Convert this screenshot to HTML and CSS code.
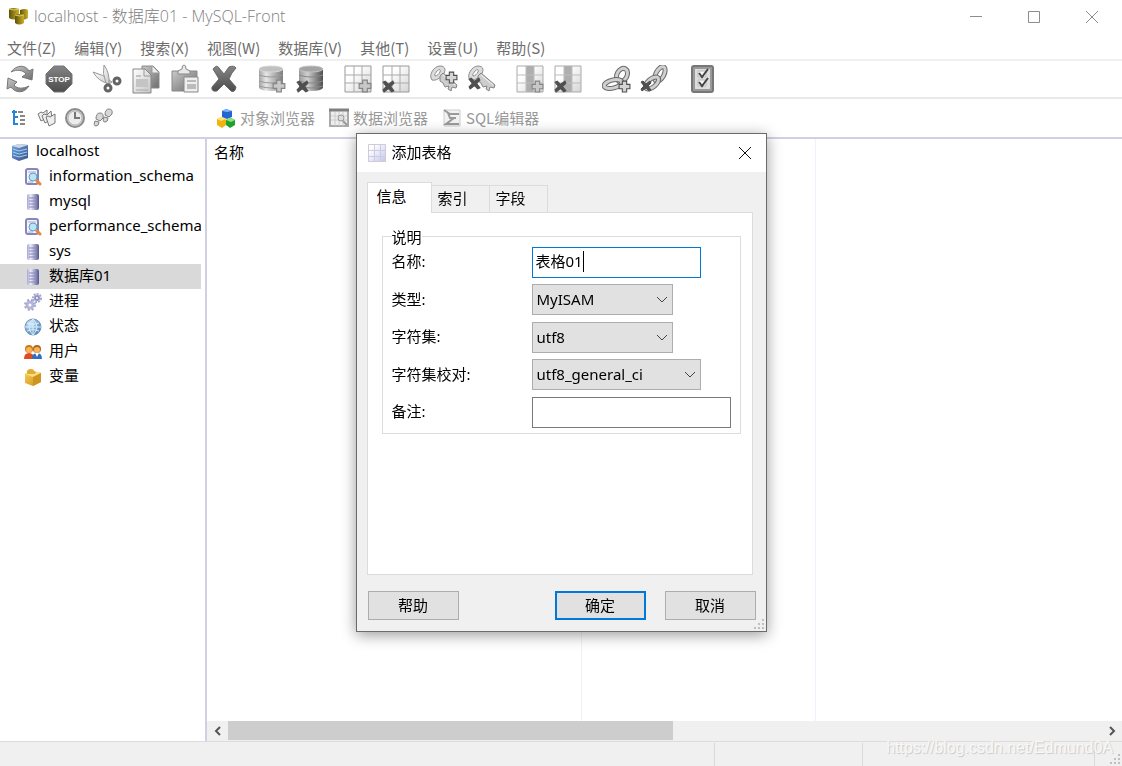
FILE: index.html
```html
<!DOCTYPE html>
<html lang="zh-CN">
<head>
<meta charset="utf-8">
<title>localhost - 数据库01 - MySQL-Front</title>
<link rel="stylesheet" href="styles.css">
</head>
<body>
<svg class="defs" aria-hidden="true">
  <defs>
    <linearGradient id="gray" x1="0" y1="0" x2="1" y2="1"><stop offset="0" stop-color="#c9c9c9"/><stop offset="1" stop-color="#6c6c6c"/></linearGradient>
    <linearGradient id="dark" x1="0" y1="0" x2="0" y2="1"><stop offset="0" stop-color="#858585"/><stop offset="1" stop-color="#4c4c4c"/></linearGradient>
    <linearGradient id="pale" x1="0" y1="0" x2="1" y2="1"><stop offset="0" stop-color="#ffffff"/><stop offset="1" stop-color="#c4c4c4"/></linearGradient>
    <linearGradient id="sheet" x1="0" y1="0" x2="1" y2="1"><stop offset=".3" stop-color="#ffffff"/><stop offset="1" stop-color="#d4d4d4"/></linearGradient>
    <linearGradient id="drum" x1="0" y1="0" x2="1" y2="0"><stop offset="0" stop-color="#a4a4a4"/><stop offset=".3" stop-color="#e6e6e6"/><stop offset="1" stop-color="#7c7c7c"/></linearGradient>
    <linearGradient id="drumdark" x1="0" y1="0" x2="1" y2="0"><stop offset="0" stop-color="#9a9a9a"/><stop offset=".35" stop-color="#d0d0d0"/><stop offset="1" stop-color="#4f4f4f"/></linearGradient>
    <linearGradient id="violet" x1="0" y1="0" x2="1" y2="0"><stop offset="0" stop-color="#a4a4d2"/><stop offset=".3" stop-color="#ececfa"/><stop offset="1" stop-color="#55558f"/></linearGradient>
    <linearGradient id="lilac" x1="0" y1="0" x2="1" y2="1"><stop offset=".2" stop-color="#ffffff"/><stop offset="1" stop-color="#c3c3f2"/></linearGradient>
    <linearGradient id="server" x1="0" y1="0" x2="1" y2="1"><stop offset="0" stop-color="#6ea5de"/><stop offset="1" stop-color="#3c4f86"/></linearGradient>
    <linearGradient id="gold" x1="0" y1="0" x2="1" y2="0"><stop offset="0" stop-color="#5f5208"/><stop offset="1" stop-color="#c9b02a"/></linearGradient>
    <linearGradient id="box" x1="0" y1="0" x2="1" y2="1"><stop offset="0" stop-color="#f7cf5c"/><stop offset="1" stop-color="#d08f12"/></linearGradient>
    <radialGradient id="globe" cx=".35" cy=".3" r=".8"><stop offset="0" stop-color="#d9edfb"/><stop offset="1" stop-color="#3d78b4"/></radialGradient>
    <symbol id="plus" viewBox="0 0 12 12"><path d="M4 1h4v3h3v4H8v3H4V8H1V4h3z" fill="#c8c8c8" stroke="#858585"/></symbol>
    <symbol id="plusdark" viewBox="0 0 12 12"><path d="M4 1h4v3h3v4H8v3H4V8H1V4h3z" fill="#d4d4d4" stroke="#4e4e4e"/></symbol>
    <symbol id="cross" viewBox="0 0 12 12"><path d="M1 2l2-1 3 3 4-3 1 2-3 3 3 4-2 1-3-3-4 3-1-2 3-3z" fill="#505050" stroke="#505050"/></symbol>
    <symbol id="key" viewBox="0 0 28 28"><path d="M2 15C-2 10 4 1 10 1c6 0 6 5 3 9-3 3-7 6-11 5zM5 11c2 0 4-2 5-4 1-3-1-3-3-1-1 2-3 3-2 5z" fill="#dcdcdc" stroke="#8c8c8c" fill-rule="evenodd"/><path d="M10 11l3-3 14 12-1 3-4-1-1 4-3-2 1-3-4 1-2-4-3-2z" fill="#cdcdcd" stroke="#858585"/><path d="M13 10l12 10" stroke="#f5f5f5"/></symbol>
    <symbol id="chain" viewBox="0 0 28 28"><g fill="none"><ellipse cx="20" cy="10" rx="5" ry="7" transform="rotate(28 20 10)" stroke="#6b6b6b" stroke-width="5"/><ellipse cx="20" cy="10" rx="5" ry="7" transform="rotate(28 20 10)" stroke="#cfcfcf" stroke-width="3"/><ellipse cx="11" cy="19" rx="9" ry="4" transform="rotate(-14 11 19)" stroke="#6b6b6b" stroke-width="5"/><ellipse cx="11" cy="19" rx="9" ry="4" transform="rotate(-14 11 19)" stroke="#cfcfcf" stroke-width="3"/></g></symbol>
    <symbol id="chaindown" viewBox="0 0 28 28"><g fill="none"><ellipse cx="20" cy="9" rx="4" ry="8" transform="rotate(28 20 9)" stroke="#6b6b6b" stroke-width="5"/><ellipse cx="20" cy="9" rx="4" ry="8" transform="rotate(28 20 9)" stroke="#cfcfcf" stroke-width="3"/><ellipse cx="12" cy="18" rx="4" ry="8" transform="rotate(50 12 18)" stroke="#6b6b6b" stroke-width="5"/><ellipse cx="12" cy="18" rx="4" ry="8" transform="rotate(50 12 18)" stroke="#cfcfcf" stroke-width="3"/></g></symbol>
    <symbol id="db" viewBox="0 0 18 18"><rect x="3" y="1" width="12" height="16" rx="2" fill="url(#violet)"/><path d="M5 5h8M5 8h8M5 11h8M5 14h8" stroke="#8585bd"/></symbol>
    <symbol id="dbsearch" viewBox="0 0 18 18"><rect x="2" y="1" width="12" height="15" rx="2" fill="#f4f4fc" stroke="#8686bd" stroke-width="2"/><path d="M4 4h8M4 14h5" stroke="#a8a8d6"/><circle cx="9" cy="9" r="4" fill="#b5e6f8" stroke="#6d9ab7"/><path d="M13 13l3 3" stroke="#e8873c" stroke-width="3" stroke-linecap="round"/></symbol>
  </defs>
</svg>

<div class="window">
  <header class="titlebar">
    <svg class="app-icon" viewBox="0 0 20 20"><path d="M0 2q5-2 10 0v9q-5 3-10 0z" fill="url(#gold)"/><path d="M11 3q5-2 8 0v8q-4 3-8 0z" fill="url(#gold)"/><path d="M6 8q5-2 9 0v8q-5 3-9 0z" fill="url(#gold)"/><path d="M6 8q5 2 9 0M0 2q5 2 10 0" fill="none" stroke="#e0ca55"/></svg>
    <h1 class="title">localhost - 数据库01 - MySQL-Front</h1>
    <div class="window-buttons">
      <button class="window-button" aria-label="最小化"><svg viewBox="0 0 14 14"><path d="M1 6.500h12"/></svg></button>
      <button class="window-button" aria-label="最大化"><svg viewBox="0 0 14 14"><path d="M1.500 1.500h11v11h-11z"/></svg></button>
      <button class="window-button" aria-label="关闭"><svg viewBox="0 0 14 14"><path d="M1 1l12 12M13 1L1 13"/></svg></button>
    </div>
  </header>

  <nav class="menubar">
    <button>文件(Z)</button><button>编辑(Y)</button><button>搜索(X)</button><button>视图(W)</button><button>数据库(V)</button><button>其他(T)</button><button>设置(U)</button><button>帮助(S)</button>
  </nav>

  <div class="toolbar">
    <div class="tool-group wide">
      <button class="tool" aria-label="刷新"><svg viewBox="0 0 28 28"><path d="M5 7C11-1 20 0 23 6l4-2-1 11-10-3 4-3C17 5 11 4 5 7z" fill="url(#gray)" stroke="#777"/><path d="M23 21c-5 8-14 7-18 1l-4 2 1-11 9 4-3 3c3 4 9 4 15 1z" fill="url(#gray)" stroke="#777"/></svg></button>
      <button class="tool" aria-label="停止"><svg viewBox="0 0 28 28"><path d="M9 1h10l8 8v10l-8 8H9l-8-8V9z" fill="url(#dark)" stroke="#777"/><text x="14" y="17" class="stop-text">STOP</text></svg></button>
    </div>
    <div class="tool-group wide">
      <button class="tool" aria-label="剪切"><svg viewBox="0 0 28 28"><path d="M0 7q10 2 19 10l-3 2Q5 16 0 7z" fill="url(#pale)" stroke="#999"/><path d="M11 0q6 8 5 19l-3-1Q9 8 11 0z" fill="url(#pale)" stroke="#999"/><circle cx="15" cy="23" r="3" fill="none" stroke="#636363" stroke-width="3"/><circle cx="24" cy="16" r="3" fill="none" stroke="#636363" stroke-width="3"/></svg></button>
      <button class="tool" aria-label="复制"><svg viewBox="0 0 28 28"><path d="M10 1h11l6 6v16H10z" fill="url(#gray)" stroke="#888"/><path d="M20 1v7h7" fill="#eee" stroke="#999"/><path d="M1 4h12l6 6v18H1z" fill="url(#pale)" stroke="#888"/><path d="M12 4v7h7M4 11h5" fill="none" stroke="#999"/><path d="M4 14h12v8H4z" fill="#c4c4c4"/><path d="M4 25h12" stroke="#aaa"/></svg></button>
      <button class="tool" aria-label="粘贴"><svg viewBox="0 0 28 28"><path d="M1 6h25v20H1z" fill="url(#gray)" stroke="#888"/><path d="M7 9V6l4-2q0-4 2-4t2 4l4 2v3z" fill="#e8e8e8" stroke="#888"/><path d="M13 12h14v15H13z" fill="#eee" stroke="#888"/><path d="M16 15h9v2h-9zM16 19h9v5h-9z" fill="#bbb"/></svg></button>
      <button class="tool" aria-label="删除"><svg viewBox="0 0 28 28"><path d="M3 4q4-5 6-1l5 6 5-7q5-2 7 1-5 5-7 11l7 8q-1 6-5 4l-7-7-7 7q-6 1-5-4l7-8z" fill="url(#dark)" stroke="#666"/></svg></button>
    </div>
    <div class="tool-group">
      <button class="tool" aria-label="添加数据库"><svg viewBox="0 0 28 28"><path d="M1 4v19q2 3 12 3t12-3V4q-2-3-12-3T1 4z" fill="url(#drum)"/><ellipse cx="13" cy="4" rx="12" ry="3" fill="#c0c0c0" stroke="#d8d8d8"/><path d="M1 10q12 4 24 0M1 16q12 4 24 0M1 21q12 4 24 0" fill="none" stroke="#999"/><use href="#plus" x="14" y="14" width="14" height="14"/></svg></button>
      <button class="tool" aria-label="删除数据库"><svg viewBox="0 0 28 28"><path d="M3 4v19q2 3 12 3t12-3V4q-2-3-12-3T3 4z" fill="url(#drumdark)"/><ellipse cx="15" cy="4" rx="12" ry="3" fill="#a4a4a4" stroke="#c4c4c4"/><path d="M3 10q12 4 24 0M3 16q12 4 24 0M3 21q12 4 24 0" fill="none" stroke="#888"/><use href="#cross" x="0" y="15" width="13" height="13"/></svg></button>
    </div>
    <div class="tool-group">
      <button class="tool" aria-label="添加表格"><svg viewBox="0 0 28 28"><path d="M1 1h26v26H1z" fill="url(#sheet)" stroke="#999"/><path d="M10 1v26M18 1v26M1 10h26M1 18h26" stroke="#aaa"/><use href="#plus" x="14" y="14" width="14" height="14"/></svg></button>
      <button class="tool" aria-label="删除表格"><svg viewBox="0 0 28 28"><path d="M1 1h26v26H1z" fill="url(#sheet)" stroke="#999"/><path d="M10 1v26M18 1v26M1 10h26M1 18h26" stroke="#aaa"/><use href="#cross" x="0" y="15" width="13" height="13"/></svg></button>
    </div>
    <div class="tool-group">
      <button class="tool" aria-label="添加索引"><svg viewBox="0 0 28 28"><use href="#key"/><use href="#plusdark" x="15" y="6" width="13" height="13"/></svg></button>
      <button class="tool" aria-label="删除索引"><svg viewBox="0 0 28 28"><use href="#key"/><use href="#cross" x="0" y="12" width="13" height="13"/></svg></button>
    </div>
    <div class="tool-group">
      <button class="tool" aria-label="添加字段"><svg viewBox="0 0 28 28"><path d="M1 1h26v26H1z" fill="url(#sheet)" stroke="#aaa"/><path d="M10 1h8v26h-8z" fill="#aeaeae"/><path d="M10 1v26M18 1v26M1 10h26M1 18h26" stroke="#bdbdbd"/><use href="#plus" x="15" y="15" width="13" height="13"/></svg></button>
      <button class="tool" aria-label="删除字段"><svg viewBox="0 0 28 28"><path d="M1 1h26v26H1z" fill="url(#sheet)" stroke="#aaa"/><path d="M10 1h8v26h-8z" fill="#aeaeae"/><path d="M10 1v26M18 1v26M1 10h26M1 18h26" stroke="#bdbdbd"/><use href="#cross" x="0" y="15" width="13" height="13"/></svg></button>
    </div>
    <div class="tool-group">
      <button class="tool" aria-label="添加外键"><svg viewBox="0 0 28 28"><use href="#chain"/><use href="#plusdark" x="16" y="15" width="13" height="13"/></svg></button>
      <button class="tool" aria-label="删除外键"><svg viewBox="0 0 28 28"><use href="#chaindown"/><use href="#cross" x="0" y="15" width="12" height="12"/></svg></button>
    </div>
    <div class="tool-group">
      <button class="tool" aria-label="属性"><svg viewBox="0 0 28 28"><rect x="4" y="1" width="21" height="26" rx="2" fill="#999" stroke="#777" stroke-width="2"/><path d="M7 4h15v20H7z" fill="#dedede"/><path d="M10 6h8v6h-8zM10 15h8v6h-8z" fill="#f5f5f5" stroke="#bbb"/><path d="M11 8l3 4 6-8M11 17l3 4 6-8" fill="none" stroke="#444" stroke-width="2"/></svg></button>
    </div>
  </div>

  <div class="viewbar">
    <div class="side-tools">
      <button class="small-tool" aria-label="导航"><svg viewBox="0 0 20 20"><path d="M5 2v14h4M3 4h5M5 9h4" fill="none" stroke="#2384dc" stroke-width="2"/><path d="M9 4h5M11 8h5M11 12h5M11 16h5" stroke="#888" stroke-width="2"/></svg></button>
      <button class="small-tool" aria-label="书签"><svg viewBox="0 0 20 20"><g fill="#eee" stroke="#777"><path d="M1 6l3-2 2 1 4-3v8l-6 3z"/><path d="M5 8l2-2 3 1 4-4 1 8-7 4z"/><path d="M9 9l2-1 2 1 5-3v9l-6 3z"/></g></svg></button>
      <button class="small-tool" aria-label="历史"><svg viewBox="0 0 20 20"><circle cx="10" cy="10" r="9" fill="#d3d3d3" stroke="#8c8c8c" stroke-width="2"/><circle cx="10" cy="10" r="7" fill="#ececec" stroke="#b5b5b5"/><path d="M10 4v6h5" fill="none" stroke="#777" stroke-width="2"/></svg></button>
      <button class="small-tool" aria-label="跟踪"><svg viewBox="0 0 20 20"><g fill="#d8d8d8" stroke="#808080"><path d="M3 11q0-6 4-6t3 5l-3 3zM2 13l4 1q0 4-3 4t-1-5zM12 7q0-6 4-6t3 5l-3 3zM11 9l4 1q0 4-3 4t-1-5z"/></g></svg></button>
    </div>
    <div class="views">
      <button class="view-tab"><svg viewBox="0 0 20 20"><path d="M6 3l4-2 6 2v6l-5 2-5-2z" fill="#2465d2"/><path d="M6 3l5 1 5-1-6-2z" fill="#7db6ff"/><path d="M1 11l4-2 5 2v6l-4 3-5-3z" fill="#f1b311"/><path d="M1 11l4 2 5-2-5-2z" fill="#ffe477"/><path d="M10 12l5-2 4 2v5l-5 3-4-3z" fill="#20a12c"/><path d="M10 12l5 2 4-2-4-2z" fill="#8de27f"/></svg>对象浏览器</button>
      <button class="view-tab"><svg viewBox="0 0 20 20"><path d="M1 2h18v16H1z" fill="#eee" stroke="#aaa" stroke-width="2"/><path d="M0 2h20" stroke="#808080" stroke-width="3"/><path d="M2 8h16M2 12h16M6 4v14M10 4v14M14 4v14" stroke="#ccc"/><circle cx="12" cy="10" r="3" fill="#ddd" stroke="#999"/><path d="M14 13l4 4" stroke="#999" stroke-width="2"/></svg>数据浏览器</button>
      <button class="view-tab"><svg viewBox="0 0 20 20"><path d="M2 2h16v16H2z" fill="#f2f2f2" stroke="#ccc"/><path d="M2 2l6 4h9M6 5l2 5h6M12 10l-8 6h13" fill="none" stroke="#999" stroke-width="2"/></svg>SQL编辑器</button>
    </div>
  </div>

  <main class="workspace">
    <aside class="sidebar">
      <ul class="tree">
        <li class="node root"><svg viewBox="0 0 18 18"><path d="M1 3l7-2 9 1v13l-9 3-7-3z" fill="url(#server)"/><path d="M1 3l7-2 9 1-9 3z" fill="#cfd6e8"/><path d="M2 6l6 2 8-2M2 9l6 2 8-2M2 12l6 2 8-2" fill="none" stroke="#9fd2f5"/></svg><span>localhost</span></li>
        <li class="node"><svg viewBox="0 0 18 18"><use href="#dbsearch"/></svg><span>information_schema</span></li>
        <li class="node"><svg viewBox="0 0 18 18"><use href="#db"/></svg><span>mysql</span></li>
        <li class="node"><svg viewBox="0 0 18 18"><use href="#dbsearch"/></svg><span>performance_schema</span></li>
        <li class="node"><svg viewBox="0 0 18 18"><use href="#db"/></svg><span>sys</span></li>
        <li class="node selected"><svg viewBox="0 0 18 18"><use href="#db"/></svg><span>数据库01</span></li>
        <li class="node"><svg viewBox="0 0 18 18"><circle cx="6" cy="12" r="3" fill="none" stroke="#b4b4da" stroke-width="3"/><circle cx="6" cy="12" r="5" fill="none" stroke="#a6a6d0" stroke-width="2" stroke-dasharray="2 2"/><circle cx="13" cy="5" r="2" fill="none" stroke="#9393c2" stroke-width="2"/><circle cx="13" cy="5" r="4" fill="none" stroke="#a6a6d0" stroke-width="2" stroke-dasharray="2 1"/></svg><span>进程</span></li>
        <li class="node"><svg viewBox="0 0 18 18"><circle cx="9" cy="9" r="8" fill="url(#globe)" stroke="#7299bd"/><path d="M1 9h16M3 5q6 3 12 0M3 13q6-3 12 0M9 1v16M9 1q-8 8 0 16M9 1q8 8 0 16" fill="none" stroke="#d9edfa"/></svg><span>状态</span></li>
        <li class="node"><svg viewBox="0 0 18 18"><circle cx="5" cy="6" r="4" fill="#c87a18"/><circle cx="5" cy="7" r="3" fill="#f7b25a"/><path d="M0 16q0-6 5-6t5 6z" fill="#dc4b24"/><circle cx="13" cy="6" r="4" fill="#a9671c"/><circle cx="13" cy="7" r="3" fill="#f7b25a"/><path d="M8 16q0-6 5-6t5 6z" fill="#2d6fc4"/><path d="M11 10l2 4 2-4z" fill="#fff"/></svg><span>用户</span></li>
        <li class="node"><svg viewBox="0 0 18 18"><path d="M1 6l8-3 8 2v9l-8 4-8-3z" fill="url(#box)"/><path d="M1 6l8-3 8 2-8 4z" fill="#ffdf7c"/><path d="M9 9l8-4v9l-8 4z" fill="#cc9420"/><path d="M3 6q-1-5 4-5 3 0 3 2 3 1 1 3z" fill="#e3ab33"/></svg><span>变量</span></li>
      </ul>
    </aside>
    <section class="list">
      <div class="columns">
        <div class="column first">名称</div><div class="column second"></div><div class="column rest"></div>
      </div>
      <div class="scrollbar">
        <button class="scroll-button" aria-label="向左滚动"><svg viewBox="0 0 10 10"><path d="M7 1L3 5l4 4"/></svg></button>
        <div class="track"><div class="thumb"></div></div>
        <button class="scroll-button" aria-label="向右滚动"><svg viewBox="0 0 10 10"><path d="M3 1l4 4-4 4"/></svg></button>
      </div>
    </section>
  </main>

  <footer class="statusbar">
    <div class="status-cell grow"></div><div class="status-cell medium"></div><div class="status-cell large"></div><div class="status-cell small"></div>
    <svg class="grip" viewBox="0 0 12 12"><path d="M9 0h2v2H9zM9 4h2v2H9zM5 4h2v2H5zM9 8h2v2H9zM5 8h2v2H5zM1 8h2v2H1z"/></svg>
    <span class="watermark">https://blog.csdn.net/Edmund0A</span>
  </footer>
</div>

<div class="overlay">
  <form class="dialog" role="dialog" aria-labelledby="dialog-title">
    <div class="dialog-head">
      <svg class="dialog-icon" viewBox="0 0 18 18"><path d="M0 0h18v18H0z" fill="url(#lilac)"/><path d="M.5.5h17v17H.5zM6.500 0v18M12.500 0v18M0 6.500h18M0 12.500h18" fill="none" stroke="#ccccda"/></svg>
      <h2 class="dialog-title" id="dialog-title">添加表格</h2>
      <button type="button" class="dialog-close" aria-label="关闭"><svg viewBox="0 0 14 14"><path d="M1 1l12 12M13 1L1 13"/></svg></button>
    </div>
    <div class="dialog-body">
      <div class="tabs" role="tablist">
        <button type="button" class="tab active" role="tab" aria-selected="true">信息</button><button type="button" class="tab" role="tab">索引</button><button type="button" class="tab" role="tab">字段</button>
      </div>
      <div class="panel" role="tabpanel">
        <fieldset class="group">
          <legend>说明</legend>
          <div class="fields">
            <label for="name">名称:</label>
            <div class="control"><input id="name" class="text active" type="text" value="表格01"><span class="caret"></span></div>
            <label for="type">类型:</label>
            <div class="control narrow"><select id="type"><option>MyISAM</option></select><svg class="chevron" viewBox="0 0 12 8"><path d="M1 1l5 5 5-5"/></svg></div>
            <label for="charset">字符集:</label>
            <div class="control narrow"><select id="charset"><option>utf8</option></select><svg class="chevron" viewBox="0 0 12 8"><path d="M1 1l5 5 5-5"/></svg></div>
            <label for="collation">字符集校对:</label>
            <div class="control"><select id="collation"><option>utf8_general_ci</option></select><svg class="chevron" viewBox="0 0 12 8"><path d="M1 1l5 5 5-5"/></svg></div>
            <label for="comment">备注:</label>
            <div class="control full"><input id="comment" class="text" type="text"></div>
          </div>
        </fieldset>
      </div>
      <div class="actions">
        <button type="button" class="action help">帮助</button>
        <button type="submit" class="action default">确定</button>
        <button type="button" class="action">取消</button>
      </div>
    </div>
    <svg class="grip" viewBox="0 0 12 12"><path d="M9 0h2v2H9zM9 4h2v2H9zM5 4h2v2H5zM9 8h2v2H9zM5 8h2v2H5zM1 8h2v2H1z"/></svg>
  </form>
</div>
</body>
</html>
```

FILE: styles.css
```css
* { box-sizing: border-box; }

body {
  margin: 0;
  background: #fff;
  color: #000;
  font: 15px/20px "Noto Sans", "Noto Sans CJK SC", sans-serif;
}

button, input, select {
  margin: 0;
  padding: 0;
  border: 0;
  background: none;
  color: inherit;
  font: inherit;
}

svg { display: block; flex: none; }
.defs { position: absolute; width: 0; height: 0; }

.window { display: flex; flex-direction: column; height: 100vh; }

/* Title bar and menu */
.titlebar { display: flex; align-items: center; height: 34px; padding-left: 9px; color: #808080; }
.app-icon { width: 20px; height: 20px; margin-right: 5px; }
.title { flex: 1; margin: 0; padding-bottom: 2px; font: 300 16px/20px "Open Sans", "Noto Sans CJK SC", sans-serif; }
.window-buttons { display: flex; padding-right: 1px; }
.window-button { display: grid; place-items: center; width: 58px; height: 34px; }
.window-button svg { width: 14px; height: 14px; fill: none; stroke: #8c8c8c; }

.menubar {
  display: flex;
  gap: 18px;
  height: 27px;
  padding: 4px 7px 0;
  border-bottom: 2px solid #f0f0f0;
  color: #6d6d6d;
  line-height: 20px;
  font-family: "Noto Sans CJK SC", sans-serif;
}
.menubar button { height: 20px; }

/* Tool bars */
.toolbar { display: flex; align-items: center; gap: 20px; height: 38px; padding: 0 6px; border-bottom: 2px solid #e9e9e9; }
.tool-group { display: flex; gap: 10px; }
.tool-group.wide { gap: 11px; }
.tool, .tool svg { width: 28px; height: 28px; }
.tool svg { overflow: visible; }
.stop-text { fill: #fff; font: bold 8px "Liberation Sans", sans-serif; text-anchor: middle; }

.viewbar { display: flex; align-items: center; height: 38px; padding-bottom: 1px; color: #999; }
.side-tools { display: flex; gap: 8px; width: 216px; padding-left: 9px; }
.small-tool, .small-tool svg { width: 20px; height: 20px; }
.views { display: flex; gap: 14px; }
.view-tab { display: flex; align-items: center; gap: 4px; font-family: "Noto Sans CJK SC", sans-serif; }
.view-tab svg { width: 20px; height: 20px; }

/* Tree and list */
.workspace { display: flex; flex: 1; min-height: 0; border-top: 2px solid #d0d0e0; }
.sidebar { width: 207px; padding-right: 4px; border-right: 2px solid #d0d0e0; overflow: hidden; }
.tree { margin: 0; padding: 0; list-style: none; }
.node { display: flex; align-items: center; gap: 7px; height: 25px; padding-left: 24px; overflow: hidden; white-space: nowrap; }
.node span { padding-bottom: 4px; }
.node.root { padding-left: 11px; }
.node.selected { background: #d9d9d9; }
.node svg { width: 18px; height: 18px; }

.list { display: flex; flex: 1; flex-direction: column; min-width: 0; }
.columns { display: flex; flex: 1; }
.column { min-width: 0; padding: 3px 7px; border-right: 1px solid #edf3fa; }
.column.first { flex: 0 0 41%; }
.column.second { flex: 0 0 234px; }
.column.rest { flex: 1; border-right: 0; }

.scrollbar { display: flex; height: 20px; background: #f0f0f0; }
.scroll-button { display: grid; place-items: center; width: 21px; }
.scroll-button svg { width: 10px; height: 10px; fill: none; stroke: #555; stroke-width: 2; }
.track { flex: 1; }
.thumb { width: 51%; height: 19px; background: #cdcdcd; }

.statusbar { position: relative; display: flex; height: 25px; border-top: 1px solid #dcdcdc; background: #f0f0f0; }
.status-cell { margin-top: 1px; border-right: 1px solid #d9d9d9; }
.status-cell.grow { flex: 1; }
.status-cell.medium { width: 148px; }
.status-cell.large { width: 232px; }
.status-cell.small { width: 27px; border-right: 0; }
.grip { position: absolute; right: 1px; bottom: 0; width: 12px; height: 12px; fill: #bfbfbf; }
.watermark {
  position: absolute;
  right: 9px;
  top: -4px;
  color: #f8f8f8;
  font: 16px/20px "Liberation Sans", sans-serif;
  text-shadow: 1px 1px 1px #c8c8c8;
}

/* Dialog */
.overlay { position: fixed; inset: 0; display: grid; place-items: center; padding-bottom: 2px; }
.dialog {
  position: relative;
  width: 411px;
  border: 1px solid #6b6b6b;
  background: #f0f0f0;
  box-shadow: 0 3px 14px rgba(0, 0, 0, .4);
}
.dialog-head { display: flex; align-items: center; height: 38px; padding-left: 11px; background: #fff; }
.dialog-icon { width: 18px; height: 18px; margin-right: 6px; }
.dialog-title { flex: 1; margin: 0; padding-bottom: 1px; font-size: 15px; font-weight: 400; line-height: 20px; }
.dialog-close { display: grid; place-items: center; width: 42px; height: 38px; }
.dialog-close svg { width: 14px; height: 14px; fill: none; stroke: #111; }
.dialog-body { padding: 10px; }

.tabs { display: flex; align-items: flex-end; }
.tab {
  width: 58px;
  height: 27px;
  padding: 0 0 1px 6px;
  border: 1px solid #dcdcdc;
  border-width: 1px 1px 0 0;
  text-align: left;
}
.tab.active { z-index: 1; width: 65px; height: 31px; margin-bottom: -1px; padding: 0 0 3px 9px; border-left-width: 1px; background: #fff; }
.panel { height: 363px; margin-right: 3px; padding: 14px 11px 0 14px; border: 1px solid #dcdcdc; background: #fff; }

.group { min-width: 0; margin: 0; padding: 0 9px 5px; border: 1px solid #dcdcdc; }
.group legend { height: 20px; padding: 0; }
.fields {
  display: grid;
  grid-template-columns: 140px 1fr;
  align-content: space-between;
  align-items: center;
  min-height: 181px;
}
.fields label { padding-bottom: 2px; }
.control { position: relative; width: 169px; height: 31px; }
.control.narrow { width: 141px; }
.control.full { width: 100%; }
.text, select { width: 100%; height: 31px; border: 1px solid #7a7a7a; background: #fff; }
.text { padding: 0 3px 3px; outline: 0; }
.text.active { border-color: #0078d7; }
.caret { position: absolute; left: 51px; top: 4px; width: 1px; height: 21px; background: #000; }
select { padding: 0 4px 1px; border-color: #adadad; border-radius: 0; background: #e1e1e1; appearance: none; }
.chevron { position: absolute; right: 5px; top: 12px; width: 12px; height: 8px; fill: none; stroke: #444; pointer-events: none; }

.actions { display: flex; gap: 19px; padding: 16px 0 1px 1px; }
.action { width: 91px; height: 29px; border: 1px solid #adadad; background: #e1e1e1; }
.action.help { margin-right: auto; }
.action.default { border: 2px solid #0078d7; }
```
